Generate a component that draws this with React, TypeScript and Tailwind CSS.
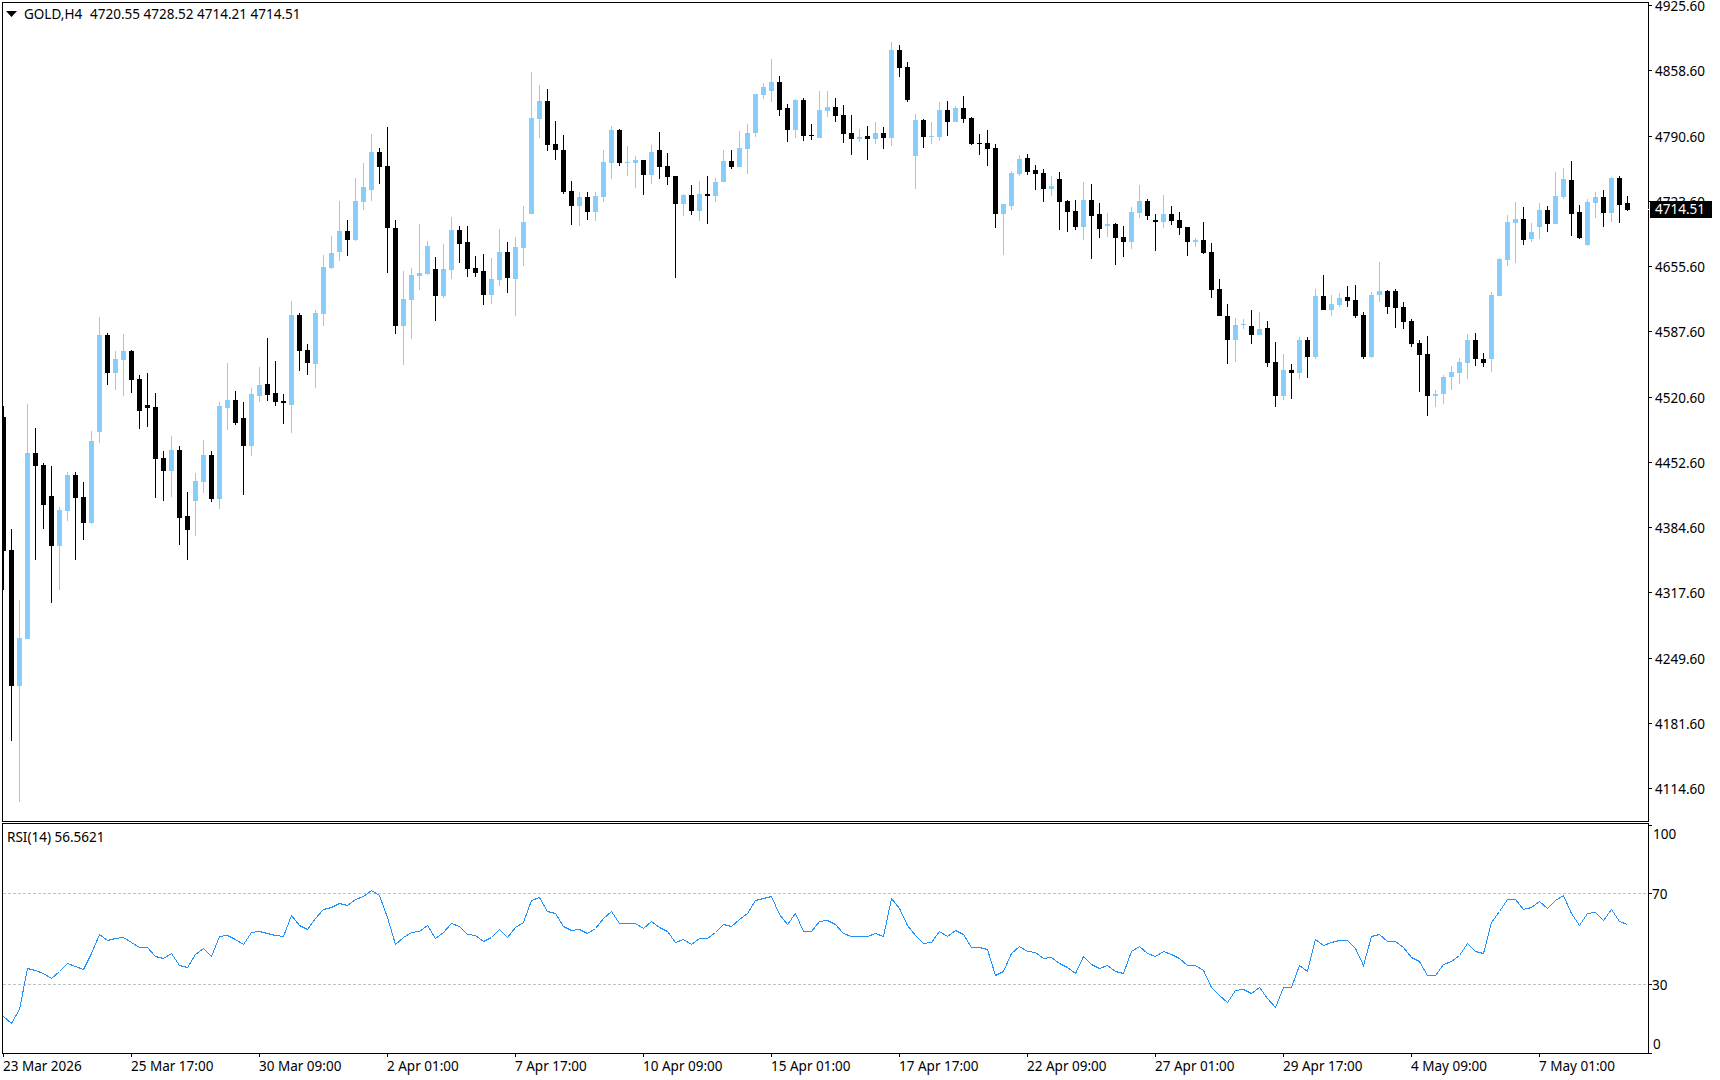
import React from "react";

// [bodyTop, bodyBottom, wickTop, wickBottom, bull]
type Candle = [number, number, number, number, 0 | 1];

const candles: Candle[] = [
  [417,551,406,590,0],[550,686,529,741,0],[638,686,600,802,1],[453,639,404,639,1],[453,466,428,560,0],[465,505,463,529,0],
  [496,546,466,603,0],[510,546,507,590,1],[475,511,472,521,1],[475,498,472,560,0],[497,523,482,540,0],[441,523,431,524,1],
  [335,432,317,443,1],[335,373,333,385,0],[359,373,351,390,1],[351,360,334,396,1],[351,380,350,393,0],[379,411,375,429,0],
  [405,408,373,427,0],[407,459,393,498,0],[458,471,451,501,0],[450,471,436,497,1],[450,518,446,545,0],[516,530,492,560,0],
  [481,501,473,536,1],[455,482,440,493,1],[455,499,451,502,0],[406,499,402,509,1],[400,408,363,430,1],[400,423,391,425,0],
  [418,446,402,495,0],[394,446,388,456,1],[385,396,367,402,1],[384,395,338,401,0],[393,402,361,406,0],[401,403,394,424,0],
  [315,405,301,433,1],[315,351,313,371,0],[350,363,344,375,0],[313,364,310,388,1],[267,314,255,326,1],[253,268,236,269,1],
  [231,252,201,261,1],[231,240,220,256,0],[201,240,178,241,1],[187,202,163,210,1],[152,190,134,201,1],[152,167,148,184,0],
  [166,228,127,273,0],[228,326,220,334,0],[299,326,271,365,1],[275,300,268,339,1],[273,276,224,290,1],[246,274,241,275,1],
  [269,296,257,321,0],[269,296,244,298,1],[230,270,217,279,1],[230,244,226,263,0],[242,269,226,277,0],[268,273,256,277,0],
  [271,295,254,305,0],[279,295,258,304,1],[252,280,229,286,1],[252,278,242,293,0],[247,279,237,316,1],[222,248,206,266,1],
  [118,214,72,214,1],[101,119,85,138,1],[101,145,89,151,0],[144,150,121,160,0],[150,192,135,194,0],[191,206,181,225,0],
  [197,206,192,226,1],[197,212,192,220,0],[196,212,192,221,1],[162,197,150,202,1],[130,163,126,179,1],[130,163,129,166,0],
  [162,163,146,176,1],[160,163,156,188,1],[160,175,160,195,0],[152,175,145,184,1],[150,167,132,179,0],[166,177,153,185,0],
  [176,204,176,278,0],[195,204,194,216,1],[195,211,185,215,0],[194,211,181,221,1],[194,196,176,224,0],[182,196,178,202,1],
  [161,182,150,182,1],[161,167,150,169,0],[148,167,131,167,1],[133,149,124,174,1],[94,133,94,137,1],[87,95,83,99,1],
  [82,91,59,102,1],[82,110,76,116,0],[108,130,104,142,0],[100,130,99,138,1],[100,136,98,141,0],[135,136,124,140,0],
  [110,138,91,138,1],[107,111,91,117,1],[107,116,98,122,0],[115,134,105,143,0],[133,139,115,155,0],[137,139,129,142,1],
  [136,139,126,160,0],[133,139,122,144,1],[133,138,127,149,0],[50,138,42,146,1],[50,68,45,77,0],[67,100,62,102,0],
  [120,156,114,189,1],[120,137,119,148,0],[136,137,122,144,1],[110,137,102,141,1],[110,122,101,136,0],[108,122,106,122,1],
  [108,119,96,123,0],[118,144,117,145,0],[143,144,134,155,0],[143,149,130,166,0],[148,214,144,228,0],[204,214,204,255,1],
  [173,206,171,210,1],[159,174,155,176,1],[158,172,154,175,0],[170,174,165,190,0],[173,189,169,202,0],[186,189,176,196,1],
  [179,202,172,230,0],[201,212,200,232,0],[211,227,200,230,0],[200,227,182,240,1],[200,216,184,259,0],[214,229,203,238,0],
  [224,226,213,237,1],[224,238,223,265,0],[237,242,226,257,0],[212,242,207,249,1],[201,213,185,218,1],[201,216,199,220,0],
  [220,222,214,251,0],[214,222,195,228,1],[214,221,206,225,0],[220,228,212,235,0],[227,242,227,256,0],[240,242,238,247,1],
  [240,253,222,254,0],[252,290,243,298,0],[289,316,279,316,0],[316,340,304,364,0],[325,340,318,362,1],[324,325,319,329,1],
  [326,335,310,344,0],[329,335,312,335,1],[328,363,321,367,0],[362,396,342,407,0],[370,396,354,400,1],[370,373,364,399,0],
  [340,373,337,379,1],[340,357,337,378,0],[296,357,289,359,1],[296,310,275,310,0],[304,310,295,316,1],[298,305,293,307,1],
  [297,301,286,307,0],[300,316,285,318,0],[315,357,312,359,0],[295,357,292,358,1],[291,295,262,302,1],[291,307,290,314,0],
  [291,308,289,328,0],[307,322,302,329,0],[321,344,319,347,0],[343,355,340,392,0],[354,396,336,416,0],[394,396,390,407,1],
  [377,394,375,404,1],[372,377,366,390,1],[362,373,358,384,1],[340,363,334,379,1],[340,359,333,366,0],[359,363,353,367,0],
  [295,359,292,372,1],[259,296,258,296,1],[222,260,215,266,1],[219,223,202,263,1],[219,240,207,245,0],[232,239,223,242,1],
  [210,227,203,239,1],[210,224,206,232,0],[196,224,172,224,1],[179,197,168,199,1],[180,214,161,236,0],[212,238,205,239,0],
  [202,245,199,246,1],[197,203,192,218,1],[197,213,190,227,0],[178,213,177,222,1],[178,205,176,223,0],[203,210,196,211,0],
];

// rsi values as read at each candle, in 3x crop units (y = 810 + v / 3)
const rsi = [
  618,640,597,475,479,489,505,483,460,468,478,428,373,391,385,381,397,412,412,438,445,430,466,472,432,415,439,379,376,388,
  403,367,364,370,376,379,316,345,357,323,298,291,280,286,268,259,241,256,322,403,381,367,364,346,385,367,340,349,373,376,
  394,382,358,382,352,337,271,262,304,310,349,361,358,370,355,325,304,340,340,340,355,334,352,362,397,388,403,385,385,367,
  343,349,328,310,271,265,259,313,343,310,364,364,334,331,342,370,379,379,379,370,379,265,295,346,376,400,397,364,379,361,
  373,412,412,418,496,482,430,409,424,427,445,442,460,472,490,439,461,475,466,484,488,424,409,430,439,424,433,445,466,466,
  481,530,556,577,541,538,550,532,565,590,532,532,466,484,388,406,396,391,391,415,466,379,373,394,394,412,442,454,496,496,
  463,454,436,400,424,430,337,304,268,268,298,292,274,295,271,256,310,346,310,307,331,298,334,343,
];

const rsiPoints = rsi
  .map((v, i) => `${3 + 8 * i + 0.5},${Math.round(810 + v / 3) + 0.5}`)
  .join(" ");

const prices = [
  "4925.60", "4858.60", "4790.60", "4723.60", "4655.60", "4587.60", "4520.60",
  "4452.60", "4384.60", "4317.60", "4249.60", "4181.60", "4114.60",
];

const dates = [
  "23 Mar 2026", "25 Mar 17:00", "30 Mar 09:00", "2 Apr 01:00", "7 Apr 17:00", "10 Apr 09:00", "15 Apr 01:00",
  "17 Apr 17:00", "22 Apr 09:00", "27 Apr 01:00", "29 Apr 17:00", "4 May 09:00", "7 May 01:00",
];

const font = "font-['Noto_Sans',sans-serif] text-[13.5px] leading-[14px] text-black whitespace-nowrap";

const Tick = () => <div className="w-[3px] h-px bg-black shrink-0" />;

export default function App() {
  return (
    <div className={`relative w-[1720px] h-[1080px] bg-white overflow-hidden pl-[2px] pt-[2px] ${font}`}>
      {/* Price chart */}
      <div className="flex h-[820px]">
        <div className="w-[1647px] h-full border border-black shrink-0">
          <svg width={1645} height={818} viewBox="3 3 1645 818" shapeRendering="crispEdges" className="block">
            {candles.map(([top, bottom, wickTop, wickBottom, bull], i) => {
              const fill = bull ? "#87cefa" : "#000000";
              return (
                <g key={i} fill={fill}>
                  <rect x={3 + 8 * i} y={wickTop} width={1} height={wickBottom - wickTop} />
                  <rect x={1 + 8 * i} y={top} width={5} height={Math.max(bottom - top, 1)} />
                </g>
              );
            })}
          </svg>
        </div>
        <div className="flex flex-col pt-[3px]">
          {prices.map((p) => (
            <div key={p} className="flex items-start h-[65.28px] shrink-0">
              <Tick />
              <span className="ml-[3px] -mt-[6px]">{p}</span>
            </div>
          ))}
        </div>
      </div>

      {/* RSI */}
      <div className="flex h-[231px] mt-px">
        <div className="w-[1647px] h-full border border-black shrink-0">
          <svg width={1645} height={229} viewBox="3 824 1645 229" className="block">
            <g stroke="#c0c0c0" strokeWidth={1} strokeDasharray="3 2" shapeRendering="crispEdges">
              <line x1={3} x2={1648} y1={893.5} y2={893.5} />
              <line x1={3} x2={1648} y1={984.5} y2={984.5} />
            </g>
            <polyline points={rsiPoints} fill="none" stroke="#1e90ff" strokeWidth={1} shapeRendering="crispEdges" />
          </svg>
        </div>
        <div className="flex flex-col pt-[2px]">
          <div className="flex items-start h-[68px] shrink-0">
            <Tick />
            <span className="ml-px mt-[2px]">100</span>
          </div>
          <div className="flex items-start h-[91px] shrink-0">
            <Tick />
            <span className="-mt-[6px]">70</span>
          </div>
          <div className="flex items-start h-[69px] shrink-0">
            <Tick />
            <span className="-mt-[6px]">30</span>
          </div>
          <div className="flex items-start">
            <Tick />
            <span className="ml-px -mt-[16px]">0</span>
          </div>
        </div>
      </div>

      {/* Time axis */}
      <div className="flex pl-px">
        {dates.map((d) => (
          <div key={d} className="w-[128px] shrink-0">
            <div className="w-px h-[3px] bg-black" />
            <div className="mt-[2px]">{d}</div>
          </div>
        ))}
      </div>

      {/* Overlays on the panes */}
      <div className="absolute left-[6px] top-[7px] flex items-center">
        <svg width={11} height={6} viewBox="0 0 11 6" className="block">
          <polygon points="0,0 11,0 5.5,6" fill="#000" />
        </svg>
        <span className="ml-[7px]">GOLD,H4</span>
        <span className="ml-[8px]">4720.55 4728.52 4714.21 4714.51</span>
      </div>
      <div className="absolute left-[7px] top-[830px]">RSI(14) 56.5621</div>
      <div className="absolute left-[1648px] top-[209px] w-[2px] h-px bg-white" />
      <div className="absolute left-[1650px] top-[201px] w-[62px] h-[17px] bg-black text-white pl-[5px] leading-[17px]">
        4714.51
      </div>
    </div>
  );
}
